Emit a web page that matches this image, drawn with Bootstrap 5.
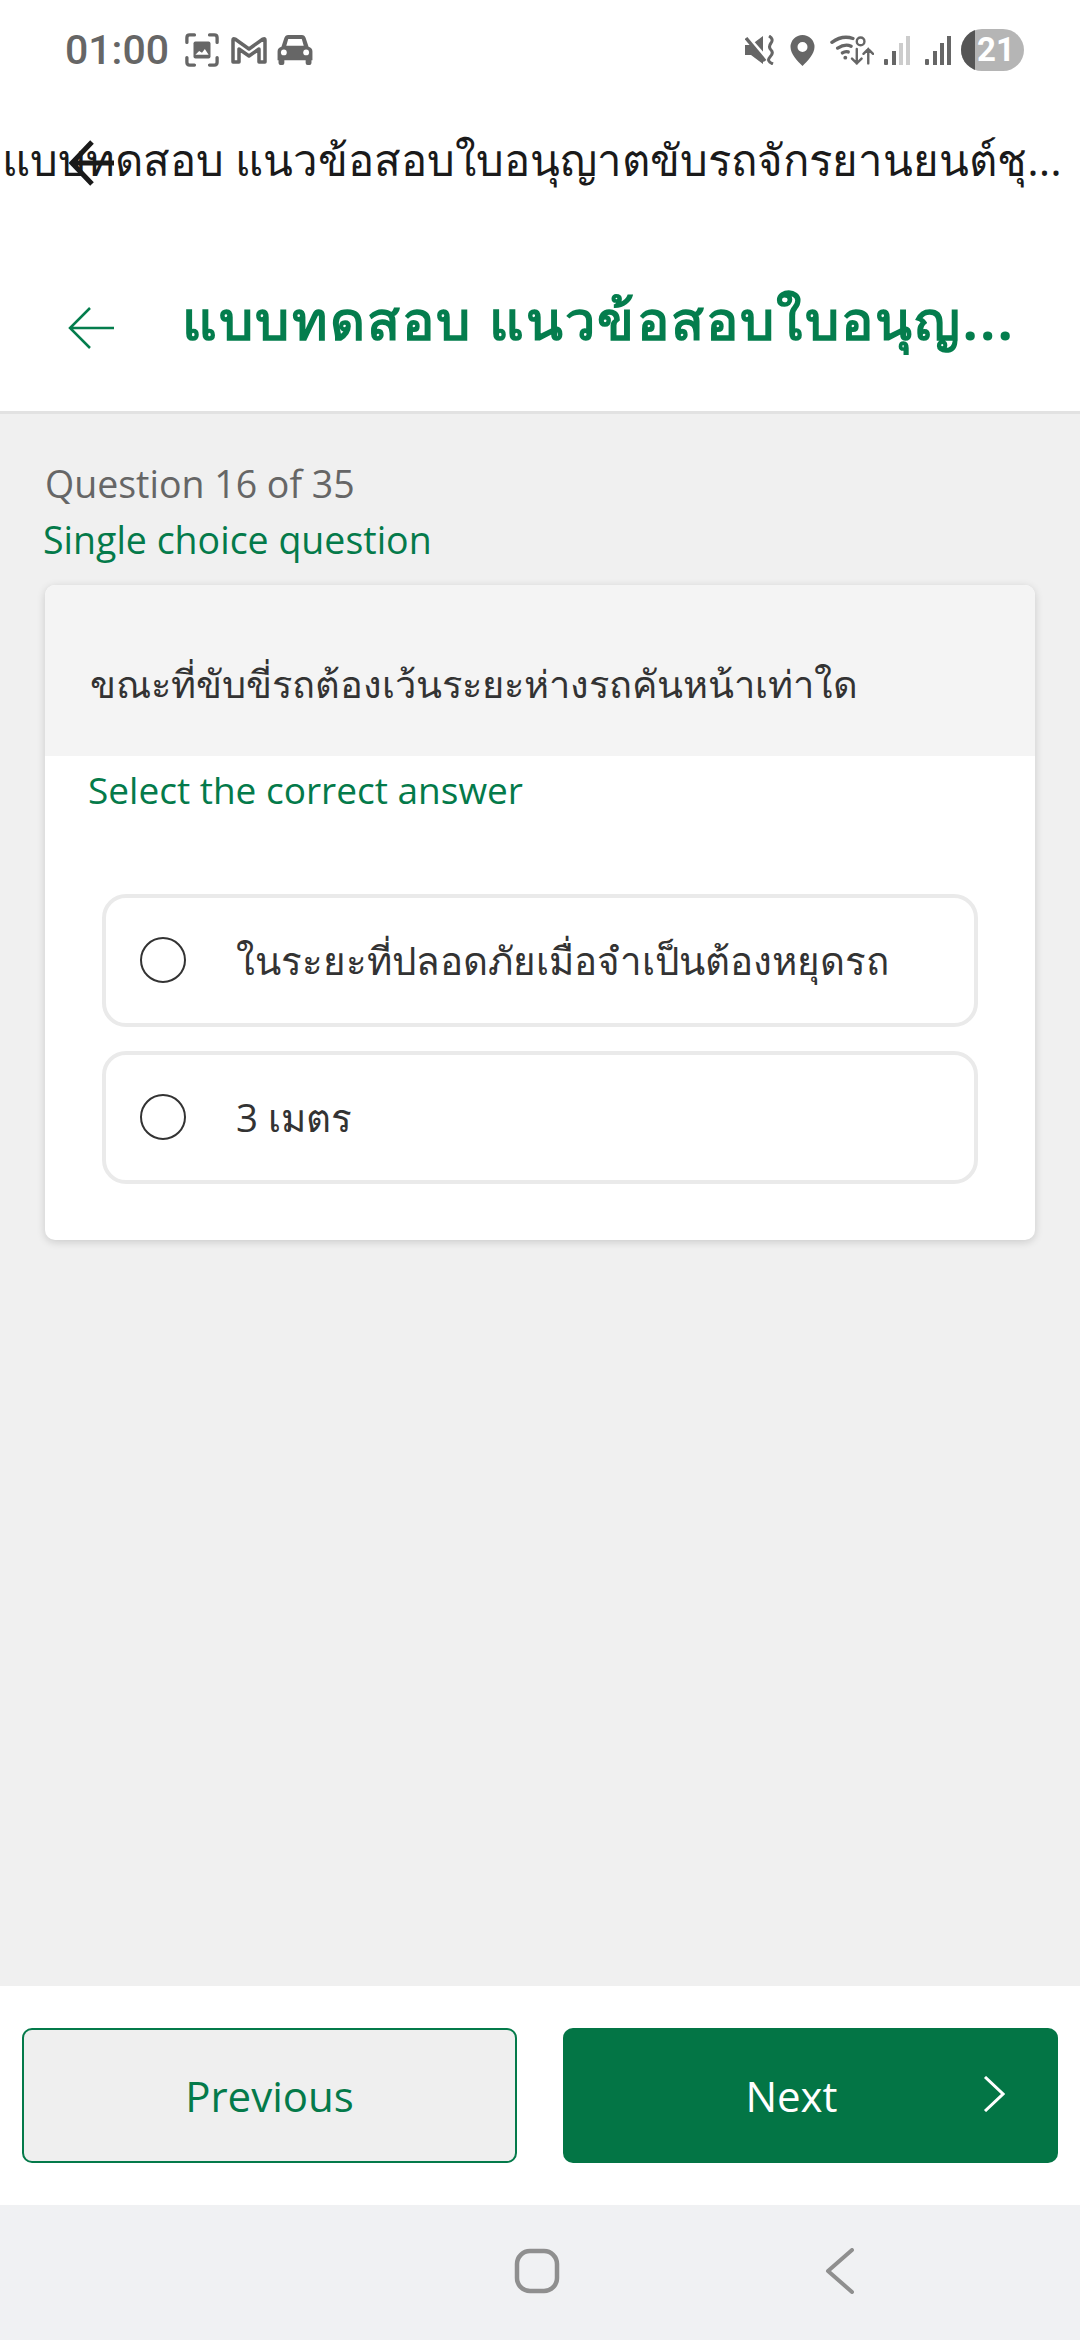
<!DOCTYPE html>
<html>

<head>
    <meta charset='utf-8'>
    <title>แบบทดสอบ</title>
    <link rel="stylesheet" href="https://cdn.jsdelivr.net/npm/bootstrap@5.3.6/dist/css/bootstrap.min.css">
    <style>
        body { background: #f0f0f0; font-family: "Open Sans", "Noto Sans", sans-serif; color: #333; }
        .app-page { height: 2340px; }
        .status-bar { height: 90px; padding: 10px 56px 0 65px; color: #666; }
        .status-time { font: 500 41px/1 Roboto, sans-serif; width: 120px; }
        .status-batt { width: 63px; height: 42px; border-radius: 21px; background: #b5b5b5; color: #fff; font: 700 33px/42px Roboto, sans-serif; overflow: hidden; }
        .status-batt i { width: 14px; background: #555; }
        .status-batt span { padding-left: 2px; }
        .gap-10 { margin-left: 10px; }
        .gap-12 { margin-left: 12px; }
        .gap-15 { margin-left: 15px; }
        .top-title { height: 150px; position: relative; color: #1a1a1a; font-size: 43.700px; line-height: 138px; padding-left: 2px; white-space: nowrap; }
        .top-arrow { position: absolute; left: 68px; top: 50px; }
        .sub-header { height: 174px; border-bottom: 3px solid #e2e2e2; padding: 4px 0 0 68px; gap: 68px; }
        .sub-title { font-weight: 700; font-size: 54px; letter-spacing: 2.200px; color: #047d4d; white-space: nowrap; padding-bottom: 16px; }
        .q-count { font-size: 37.500px; color: #666; line-height: 50px; margin: 45px 0 6px 45px; }
        .q-kind { font-size: 37.500px; color: #047a4a; line-height: 50px; margin: 0 0 20px 43px; }
        .q-card { margin: 0 45px; height: 655px; border: 0; border-radius: 10px; box-shadow: 0 2px 8px rgba(0,0,0,.16); overflow: hidden; }
        .q-head { height: 171px; background: #f4f4f4; font-size: 38px; padding: 26px 45px 0; }
        .q-hint { font-size: 37px; color: #047a4a; line-height: 50px; margin: 9px 0 0 43px; }
        .q-options { margin: 79px 57px 0; gap: 24px; }
        .q-option { height: 133px; border: 4px solid #eaeaea; border-radius: 24px; padding-left: 34px; gap: 50px; font-size: 38.500px; }
        .q-dot { width: 46px; height: 46px; border: 2px solid #333; border-radius: 50%; flex: none; margin-top: -2px; }
        .foot-bar { height: 219px; background: #fff; padding: 0 22px; gap: 46px; }
        .foot-bar .btn { flex: 0 0 495px; height: 135px; font-size: 42px; border-radius: 10px; position: relative; }
        .btn-prev { background: #efefef; border: 2px solid #047a4a; color: #047a4a; }
        .foot-bar .btn-go { background: #037545; border: 0; color: #fff; padding-right: 50px; }
        .btn-chev { position: absolute; right: 53px; top: 48px; }
        .nav-bar { height: 135px; background: #f0f1f3; }
        .nav-home { left: 514px; top: 43px; }
        .nav-back { left: 825px; top: 43px; }
    </style>
</head>

<body>
    <div class="app-page d-flex flex-column">

        <div class="status-bar bg-white d-flex align-items-center">
            <span class="status-time">01:00</span>
            <svg width="34" height="34" viewBox="0 0 36 36" fill="none" stroke="#666" stroke-width="3.500" stroke-linecap="round">
                <path d="M2 10V5q0-3 3-3h5M26 2h5q3 0 3 3v5M2 26v5q0 3 3 3h5M26 34h5q3 0 3-3v-5" />
                <rect x="9" y="9" width="18" height="18" rx="2" fill="#666" stroke="none" />
                <path d="M11 23l4-4 3 2 3-4 4 6z" fill="#fff" stroke="none" />
            </svg>
            <svg class="gap-12" width="36" height="28" viewBox="0 0 36 28" fill="none" stroke="#666" stroke-width="3.500" stroke-linejoin="round">
                <path d="M2 26V4q0-2 2-1l14 10L32 3q2-1 2 1v22h-6V13l-10 7-10-7v13z" />
            </svg>
            <svg class="gap-10" width="36" height="31" viewBox="0 0 36 32" fill="#666">
                <path d="M7 3q1-3 4-3h14q3 0 4 3l3 9q4 1 4 5v9h-1v3q0 2-2 2h-2q-2 0-2-2v-3H7v3q0 2-2 2H3q-2 0-2-2v-3H0v-9q0-4 4-5zM9 11h18l-2-7H11z" />
                <circle cx="6.500" cy="18" r="3" fill="#fff" />
                <circle cx="29.500" cy="18" r="3" fill="#fff" />
            </svg>

            <span class="ms-auto"></span>
            <!-- mute with vibrate line -->
            <svg width="30" height="30" viewBox="0 0 30 30">
                <path d="M0 10h6l12-9v28L6 20H0z" fill="#666" />
                <path d="M1 1l21 24" stroke="#fff" stroke-width="5" />
                <path d="M1 3l19 23" stroke="#666" stroke-width="3.500" />
                <path d="M24 1q5 3 2 7t0 7-1 7 3 7" fill="none" stroke="#666" stroke-width="3" />
            </svg>
            <svg class="gap-15" width="25" height="31" viewBox="0 0 24 31" fill="#666">
                <path fill-rule="evenodd" d="M12 0a12 12 0 0 1 12 12c0 7-7 14-12 19C7 26 0 19 0 12A12 12 0 0 1 12 0zm0 7a5 5 0 1 0 0 10 5 5 0 0 0 0-10z" />
            </svg>
            <svg class="gap-15" width="44" height="32" viewBox="0 0 46 32" fill="none" stroke="#666" stroke-width="3.500" stroke-linecap="round">
                <path d="M2 8q11-8 22-4M8 14q8-5 14-2M13 19q3-2 6-1" />
                <circle cx="16" cy="24" r="2" fill="#666" stroke="none" />
                <path d="M28 15v15M23 25l5 5 5-5M40 30V15M35 20l5-5 5 5" stroke-width="2.500" />
                <circle cx="32" cy="7" r="4" stroke-width="2.500" />
            </svg>
            <svg class="gap-10" width="26" height="29" viewBox="0 0 26 29">
                <rect x="0" y="23" width="4" height="6" rx="1" fill="#666" />
                <rect x="8" y="15" width="4" height="14" fill="#666" />
                <rect x="15" y="7" width="4" height="22" fill="#ccc" />
                <rect x="22" y="0" width="4" height="29" fill="#ccc" />
            </svg>
            <svg class="gap-15" width="26" height="29" viewBox="0 0 26 29" fill="#666">
                <rect x="0" y="23" width="4" height="6" rx="1" />
                <rect x="8" y="15" width="4" height="14" />
                <rect x="15" y="7" width="4" height="22" />
                <rect x="22" y="0" width="4" height="29" />
            </svg>
            <div class="status-batt d-flex gap-10"><i></i><span>21</span></div>
        </div>

        <div class="top-title bg-white">
            แบบทดสอบ แนวข้อสอบใบอนุญาตขับรถจักรยานยนต์ชุ...
            <svg class="top-arrow" width="46" height="46" viewBox="0 0 46 46" fill="none" stroke="#1a1a1a" stroke-width="5">
                <path d="M46 23H4M24 2L4 23l20 21" />
            </svg>
        </div>

        <div class="sub-header bg-white d-flex align-items-center">
            <svg class="flex-shrink-0" width="46" height="42" viewBox="0 0 46 42" fill="none" stroke="#047d4d" stroke-width="2.500">
                <path d="M46 21H2M22 1L2 21l20 20" />
            </svg>
            <div class="sub-title">แบบทดสอบ แนวข้อสอบใบอนุญ...</div>
        </div>

        <div class="flex-grow-1">
            <div class="q-count">Question 16 of 35</div>
            <div class="q-kind">Single choice question</div>
            <div class="card q-card">
                <div class="q-head d-flex align-items-center">ขณะที่ขับขี่รถต้องเว้นระยะห่างรถคันหน้าเท่าใด</div>
                <div class="q-hint">Select the correct answer</div>
                <div class="q-options d-flex flex-column">
                    <div class="q-option d-flex align-items-center"><span class="q-dot"></span><span>ในระยะที่ปลอดภัยเมื่อจำเป็นต้องหยุดรถ</span></div>
                    <div class="q-option d-flex align-items-center"><span class="q-dot"></span><span>3 เมตร</span></div>
                </div>
            </div>
        </div>

        <div class="foot-bar d-flex align-items-center">
            <button class="btn btn-prev" type="button">Previous</button>
            <button class="btn btn-go" type="button">Next
                <svg class="btn-chev" width="22" height="36" viewBox="0 0 22 36" fill="none" stroke="#fff" stroke-width="3">
                    <path d="M2 1l18 17L2 35" />
                </svg>
            </button>
        </div>

        <div class="nav-bar position-relative">
            <svg class="nav-home position-absolute" width="46" height="46" viewBox="0 0 46 46" fill="none" stroke="#8f8f8f" stroke-width="4.500">
                <rect x="3" y="3" width="40" height="40" rx="13" />
            </svg>
            <svg class="nav-back position-absolute" width="30" height="46" viewBox="0 0 30 46" fill="none" stroke="#8f8f8f" stroke-width="4" stroke-linecap="round" stroke-linejoin="round">
                <path d="M27 2L3 23l24 21" />
            </svg>
        </div>
    </div>
    <script src="https://cdn.jsdelivr.net/npm/bootstrap@5.3.6/dist/js/bootstrap.bundle.min.js"></script>
</body>

</html>
